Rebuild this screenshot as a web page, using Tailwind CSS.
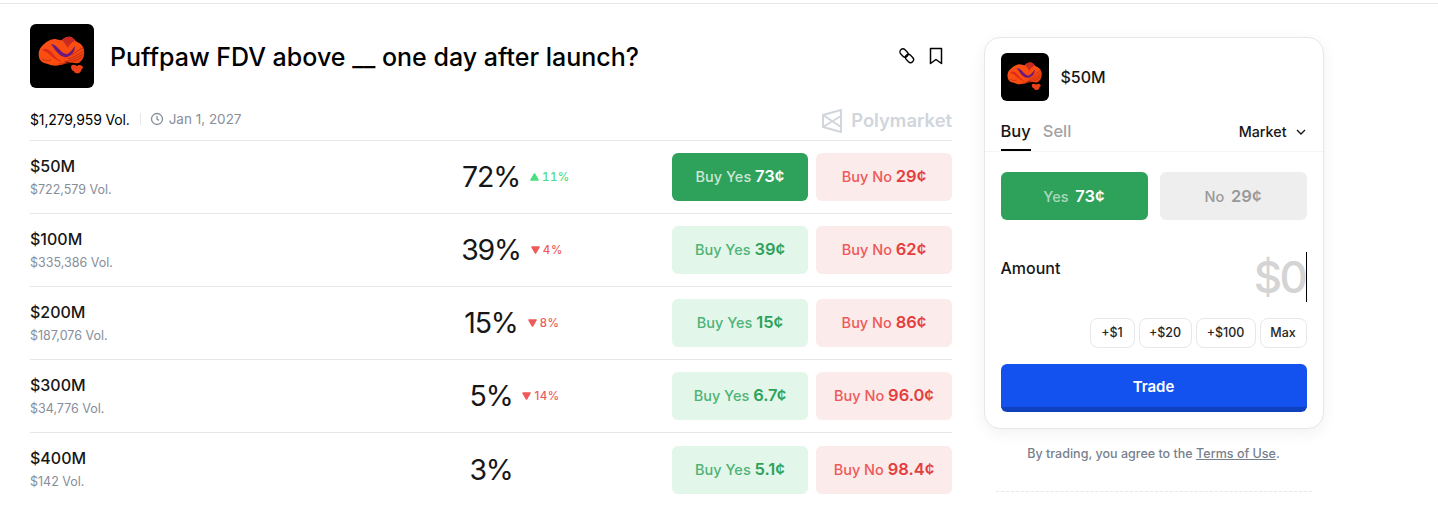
<!DOCTYPE html>
<html lang="en"><head><meta charset="utf-8"><title>Puffpaw</title>
<script src="https://cdn.jsdelivr.net/npm/@tailwindcss/browser@4"></script></head>
<body class="bg-white font-[Inter,sans-serif] overflow-hidden">
<svg width="0" height="0" class="absolute"><defs>
<linearGradient id="g" x1="0" y1="0" x2="1" y2="1"><stop offset="0" stop-color="#f8501a"/><stop offset=".6" stop-color="#fb4d0e"/><stop offset="1" stop-color="#e83a14"/></linearGradient>
<symbol id="logo" viewBox="0 0 64 64">
<rect width="64" height="64" fill="#000"/>
<path d="M9 33C8 29 9 25 12 22C16 18 20 15 25 15C28 15 30 17 32 16C34 14 37 12 41 13C44 14 45 17 47 18C50 19 53 21 54 26C55 31 53 36 50 38C47 41 42 38 37 38C35 39 33 41 30 41C26 42 22 42 18 40C15 39 13 39 11 37C10 36 9 34 9 33z" fill="url(#g)"/>
<path d="M21 20C25 20 28 24 31 27C34 30 37 31 39 29C41 27 43 25 45 22C45 25 44 28 42 30C38 34 34 34 30 31C26 28 24 24 21 20z" fill="#6a1a7e"/>
<path d="M32 16C34 14 37 12 41 13C43 14 44 15 45 17C42 18 39 20 38 24C36 21 34 18 32 16z" fill="#c92a22"/>
<path d="M12 26C16 23 20 26 23 30C25 33 29 36 32 38C27 37 22 33 19 30C17 28 14 27 12 26z" fill="#dc2c18"/>
<path d="M42 31C46 28 50 25 53 24M38 35C45 33 50 29 54 27M34 38C42 37 49 32 54 30M29 40C38 40 46 37 52 33" stroke="#b82a10" stroke-width=".8" fill="none"/>
<path d="M12 35C15 37 18 37 21 36" stroke="#b82a10" stroke-width=".8" fill="none"/>
<path d="M41 42C43 40 45 41 47 42C49 40 52 41 53 43C53 45 51 45 51 47C50 49 48 50 46 49C44 49 44 47 44 47C42 47 41 45 41 42z" fill="#ee4018"/>
</symbol></defs></svg>
<div class="border-t border-gray-200 mt-[3px] pl-[30px] flex gap-[32px] items-start">
<main class="w-[922px] shrink-0">
 <header class="flex items-center h-[64px] mt-[20px]">
  <svg class="w-[64px] h-[64px] rounded-md shrink-0"><use href="#logo"/></svg>
  <h1 class="ml-4 text-[25px] leading-8 font-medium text-black flex-1 pt-[2px]">Puffpaw FDV above __ one day after launch?</h1>
  <div class="flex items-center gap-[12px] mr-[8px] text-black">
   <svg class="w-[18px] h-[18px]" viewBox="0 0 18 18" fill="none" stroke="currentColor" stroke-width="1.300"><rect x="1.500" y="3" width="9" height="6" rx="3" transform="rotate(45 6 6)"/><rect x="7" y="8.500" width="9" height="6" rx="3" transform="rotate(45 11.500 11.500)"/></svg>
   <svg class="w-[16px] h-[18px]" viewBox="0 0 16 18" fill="none" stroke="currentColor" stroke-width="1.500" stroke-linejoin="round"><path d="M2.500 1.500h11v15L8 12.500l-5.500 4z"/></svg>
  </div>
 </header>
 <div class="flex items-center justify-between h-[24px] mt-[19px] mb-[9px]">
  <div class="flex items-center text-[14px]">
   <span class="text-black tracking-[-0.15px]">$1,279,959 Vol.</span>
   <span class="w-px h-[12px] bg-gray-200 ml-[10px] mr-[9px]"></span>
   <svg class="w-[14px] h-[14px] text-[#868e9a] mr-[5px]" viewBox="0 0 14 14" fill="none" stroke="currentColor" stroke-width="1.300"><circle cx="7" cy="7" r="5.500"/><path d="M7 4v3.200l2 1.200"/></svg>
   <span class="text-[#868e9a] text-[13.500px]">Jan 1, 2027</span>
  </div>
  <div class="flex items-center text-gray-300 pt-[3px]">
   <svg class="w-[20px] h-[24px]" viewBox="0 0 20 24" fill="none" stroke="currentColor" stroke-width="2" stroke-linejoin="round"><path d="M1 6 19 1v22L1 18z"/><path d="M1 6l18 12M1 18 19 7"/></svg>
   <span class="ml-[9px] text-[18.400px] font-semibold">Polymarket</span>
  </div>
 </div>
 <div class="divide-y divide-gray-200 border-t border-gray-200">
  <div class="flex items-center h-[73px]">
   <div class="w-[280px] pb-[1px]"><div class="text-[16px] leading-5 font-medium text-neutral-900">$50M</div><div class="text-[12.500px] leading-4 text-[#868e9a] mt-[6px]">$722,579 Vol.</div></div>
   <div class="flex-1 flex justify-center"><div class="relative text-[28.500px] tracking-[-1.200px] leading-9 text-neutral-900 min-w-[40px] text-center">72%
    <span class="absolute left-full ml-[10px] top-[10px] flex items-center gap-[3px] text-[11.500px] leading-4 font-medium tracking-[0.5px] tabular-nums text-[#4ade80]"><svg class="w-[9px] h-[8px]" viewBox="0 0 9 8"><path d="M4.500 1 8 7H1z" fill="currentColor" stroke="currentColor" stroke-width="1.500" stroke-linejoin="round"/></svg>11%</span></div></div>
   <div class="flex gap-2 w-[280px] text-[14.500px] font-medium">
    <button class="w-[136px] h-[48px] pb-[1px] rounded-md bg-[#2ea25a] text-white/75">Buy Yes <b class="font-semibold text-[16.500px] text-white">73¢</b></button>
    <button class="w-[136px] h-[48px] pb-[1px] rounded-md bg-[#fbebea] text-[#ee5a5a]">Buy No <b class="font-semibold text-[16.500px] text-[#e53e3e]">29¢</b></button>
   </div>
  </div>
  <div class="flex items-center h-[73px]">
   <div class="w-[280px] pb-[1px]"><div class="text-[16px] leading-5 font-medium text-neutral-900">$100M</div><div class="text-[12.500px] leading-4 text-[#868e9a] mt-[6px]">$335,386 Vol.</div></div>
   <div class="flex-1 flex justify-center"><div class="relative text-[28.500px] tracking-[-1.200px] leading-9 text-neutral-900 min-w-[40px] text-center">39%
    <span class="absolute left-full ml-[10px] top-[10px] flex items-center gap-[3px] text-[11.500px] leading-4 font-medium tracking-[0.5px] text-[#ee5a5a]"><svg class="w-[9px] h-[8px]" viewBox="0 0 9 8"><path d="M4.500 7 8 1H1z" fill="currentColor" stroke="currentColor" stroke-width="1.500" stroke-linejoin="round"/></svg>4%</span></div></div>
   <div class="flex gap-2 w-[280px] text-[14.500px] font-medium">
    <button class="w-[136px] h-[48px] pb-[1px] rounded-md bg-[#e3f6ea] text-[#4fb377]">Buy Yes <b class="font-semibold text-[16.500px] text-[#2ea25a]">39¢</b></button>
    <button class="w-[136px] h-[48px] pb-[1px] rounded-md bg-[#fbebea] text-[#ee5a5a]">Buy No <b class="font-semibold text-[16.500px] text-[#e53e3e]">62¢</b></button>
   </div>
  </div>
  <div class="flex items-center h-[73px]">
   <div class="w-[280px] pb-[1px]"><div class="text-[16px] leading-5 font-medium text-neutral-900">$200M</div><div class="text-[12.500px] leading-4 text-[#868e9a] mt-[6px]">$187,076 Vol.</div></div>
   <div class="flex-1 flex justify-center"><div class="relative text-[28.500px] tracking-[-1.200px] leading-9 text-neutral-900 min-w-[40px] text-center">15%
    <span class="absolute left-full ml-[10px] top-[10px] flex items-center gap-[3px] text-[11.500px] leading-4 font-medium tracking-[0.5px] text-[#ee5a5a]"><svg class="w-[9px] h-[8px]" viewBox="0 0 9 8"><path d="M4.500 7 8 1H1z" fill="currentColor" stroke="currentColor" stroke-width="1.500" stroke-linejoin="round"/></svg>8%</span></div></div>
   <div class="flex gap-2 w-[280px] text-[14.500px] font-medium">
    <button class="w-[136px] h-[48px] pb-[1px] rounded-md bg-[#e3f6ea] text-[#4fb377]">Buy Yes <b class="font-semibold text-[16.500px] text-[#2ea25a]">15¢</b></button>
    <button class="w-[136px] h-[48px] pb-[1px] rounded-md bg-[#fbebea] text-[#ee5a5a]">Buy No <b class="font-semibold text-[16.500px] text-[#e53e3e]">86¢</b></button>
   </div>
  </div>
  <div class="flex items-center h-[73px]">
   <div class="w-[280px] pb-[1px]"><div class="text-[16px] leading-5 font-medium text-neutral-900">$300M</div><div class="text-[12.500px] leading-4 text-[#868e9a] mt-[6px]">$34,776 Vol.</div></div>
   <div class="flex-1 flex justify-center"><div class="relative text-[28.500px] tracking-[-1.200px] leading-9 text-neutral-900 min-w-[40px] text-center">5%
    <span class="absolute left-full ml-[10px] top-[10px] flex items-center gap-[3px] text-[11.500px] leading-4 font-medium tracking-[0.5px] text-[#ee5a5a]"><svg class="w-[9px] h-[8px]" viewBox="0 0 9 8"><path d="M4.500 7 8 1H1z" fill="currentColor" stroke="currentColor" stroke-width="1.500" stroke-linejoin="round"/></svg>14%</span></div></div>
   <div class="flex gap-2 w-[280px] text-[14.500px] font-medium">
    <button class="w-[136px] h-[48px] pb-[1px] rounded-md bg-[#e3f6ea] text-[#4fb377]">Buy Yes <b class="font-semibold text-[16.500px] text-[#2ea25a]">6.7¢</b></button>
    <button class="w-[136px] h-[48px] pb-[1px] rounded-md bg-[#fbebea] text-[#ee5a5a]">Buy No <b class="font-semibold text-[16.500px] text-[#e53e3e]">96.0¢</b></button>
   </div>
  </div>
  <div class="flex items-center h-[73px]">
   <div class="w-[280px] pb-[1px]"><div class="text-[16px] leading-5 font-medium text-neutral-900">$400M</div><div class="text-[12.500px] leading-4 text-[#868e9a] mt-[6px]">$142 Vol.</div></div>
   <div class="flex-1 flex justify-center"><div class="relative text-[28.500px] tracking-[-1.200px] leading-9 text-neutral-900 min-w-[40px] text-center">3%</div></div>
   <div class="flex gap-2 w-[280px] text-[14.500px] font-medium">
    <button class="w-[136px] h-[48px] pb-[1px] rounded-md bg-[#e3f6ea] text-[#4fb377]">Buy Yes <b class="font-semibold text-[16.500px] text-[#2ea25a]">5.1¢</b></button>
    <button class="w-[136px] h-[48px] pb-[1px] rounded-md bg-[#fbebea] text-[#ee5a5a]">Buy No <b class="font-semibold text-[16.500px] text-[#e53e3e]">98.4¢</b></button>
   </div>
  </div>
 </div>
</main>
<aside class="w-[340px] shrink-0 mt-[33px] -ml-[0.5px]">
 <div class="w-[340px] h-[392px] rounded-2xl border border-gray-200 bg-white shadow-[0_4px_16px_rgba(0,0,0,0.06)] pt-[15px]">
  <div class="flex items-center px-4 gap-3">
   <svg class="w-[48px] h-[48px] rounded-md"><use href="#logo"/></svg>
   <span class="text-[16px] font-medium text-neutral-900">$50M</span>
  </div>
  <div class="flex items-center justify-between px-4 mt-[15px] border-b border-gray-100 h-[36px]">
   <div class="flex gap-[12px] h-full">
    <span class="h-full border-b-2 border-black text-[16.500px] font-medium leading-[30px] text-neutral-900">Buy</span>
    <span class="text-[16.500px] font-medium leading-[30px] text-[#a3a3a3]">Sell</span>
   </div>
   <div class="flex items-center gap-[8px] text-[14.300px] font-medium text-neutral-900 pb-[4px]">Market
    <svg class="w-[12px] h-[12px]" viewBox="0 0 12 12" fill="none" stroke="currentColor" stroke-width="1.400"><path d="M2 4l4 4 4-4"/></svg></div>
  </div>
  <div class="flex gap-3 px-4 mt-[20px] text-[14.500px] font-medium">
   <button class="w-[147px] h-[48px] rounded-md bg-[#2ea25a] text-white/60">Yes <b class="ml-[3px] font-semibold text-[16.500px] text-white">73¢</b></button>
   <button class="w-[147px] h-[48px] rounded-md bg-[#eeeeee] text-[#999999]">No <b class="ml-[3px] font-semibold text-[16.500px] text-[#999999]">29¢</b></button>
  </div>
  <div class="flex justify-between px-4 mt-[32px] h-[50px]">
   <span class="text-[16px] font-medium text-neutral-900 mt-[4px]">Amount</span>
   <span class="text-[44px] tracking-[-2.500px] leading-[50px] font-medium text-[#d4d4d4] border-r border-black">$0</span>
  </div>
  <div class="flex justify-end gap-[4px] px-4 mt-[16px] text-[12.500px] font-medium text-neutral-800">
   <button class="h-[30px] w-[45px] rounded-lg border border-gray-200">+$1</button>
   <button class="h-[30px] w-[53px] rounded-lg border border-gray-200">+$20</button>
   <button class="h-[30px] w-[60px] rounded-lg border border-gray-200">+$100</button>
   <button class="h-[30px] w-[47px] rounded-lg border border-gray-200">Max</button>
  </div>
  <div class="px-4 mt-[16px]"><button class="w-full h-[48px] pt-[4px] rounded-md bg-[#1452f0] border-b-[5px] border-[#0f41bd] text-white font-semibold text-[15px]">Trade</button></div>
 </div>
 <p class="text-center text-[12.500px] font-medium text-[#77808d] mt-[16px] tracking-[0.02px]">By trading, you agree to the <u>Terms of Use</u>.</p>
 <div class="mx-[12px] mt-[27px] border-t border-dashed border-gray-200"></div>
</aside>
</div>
</body></html>
